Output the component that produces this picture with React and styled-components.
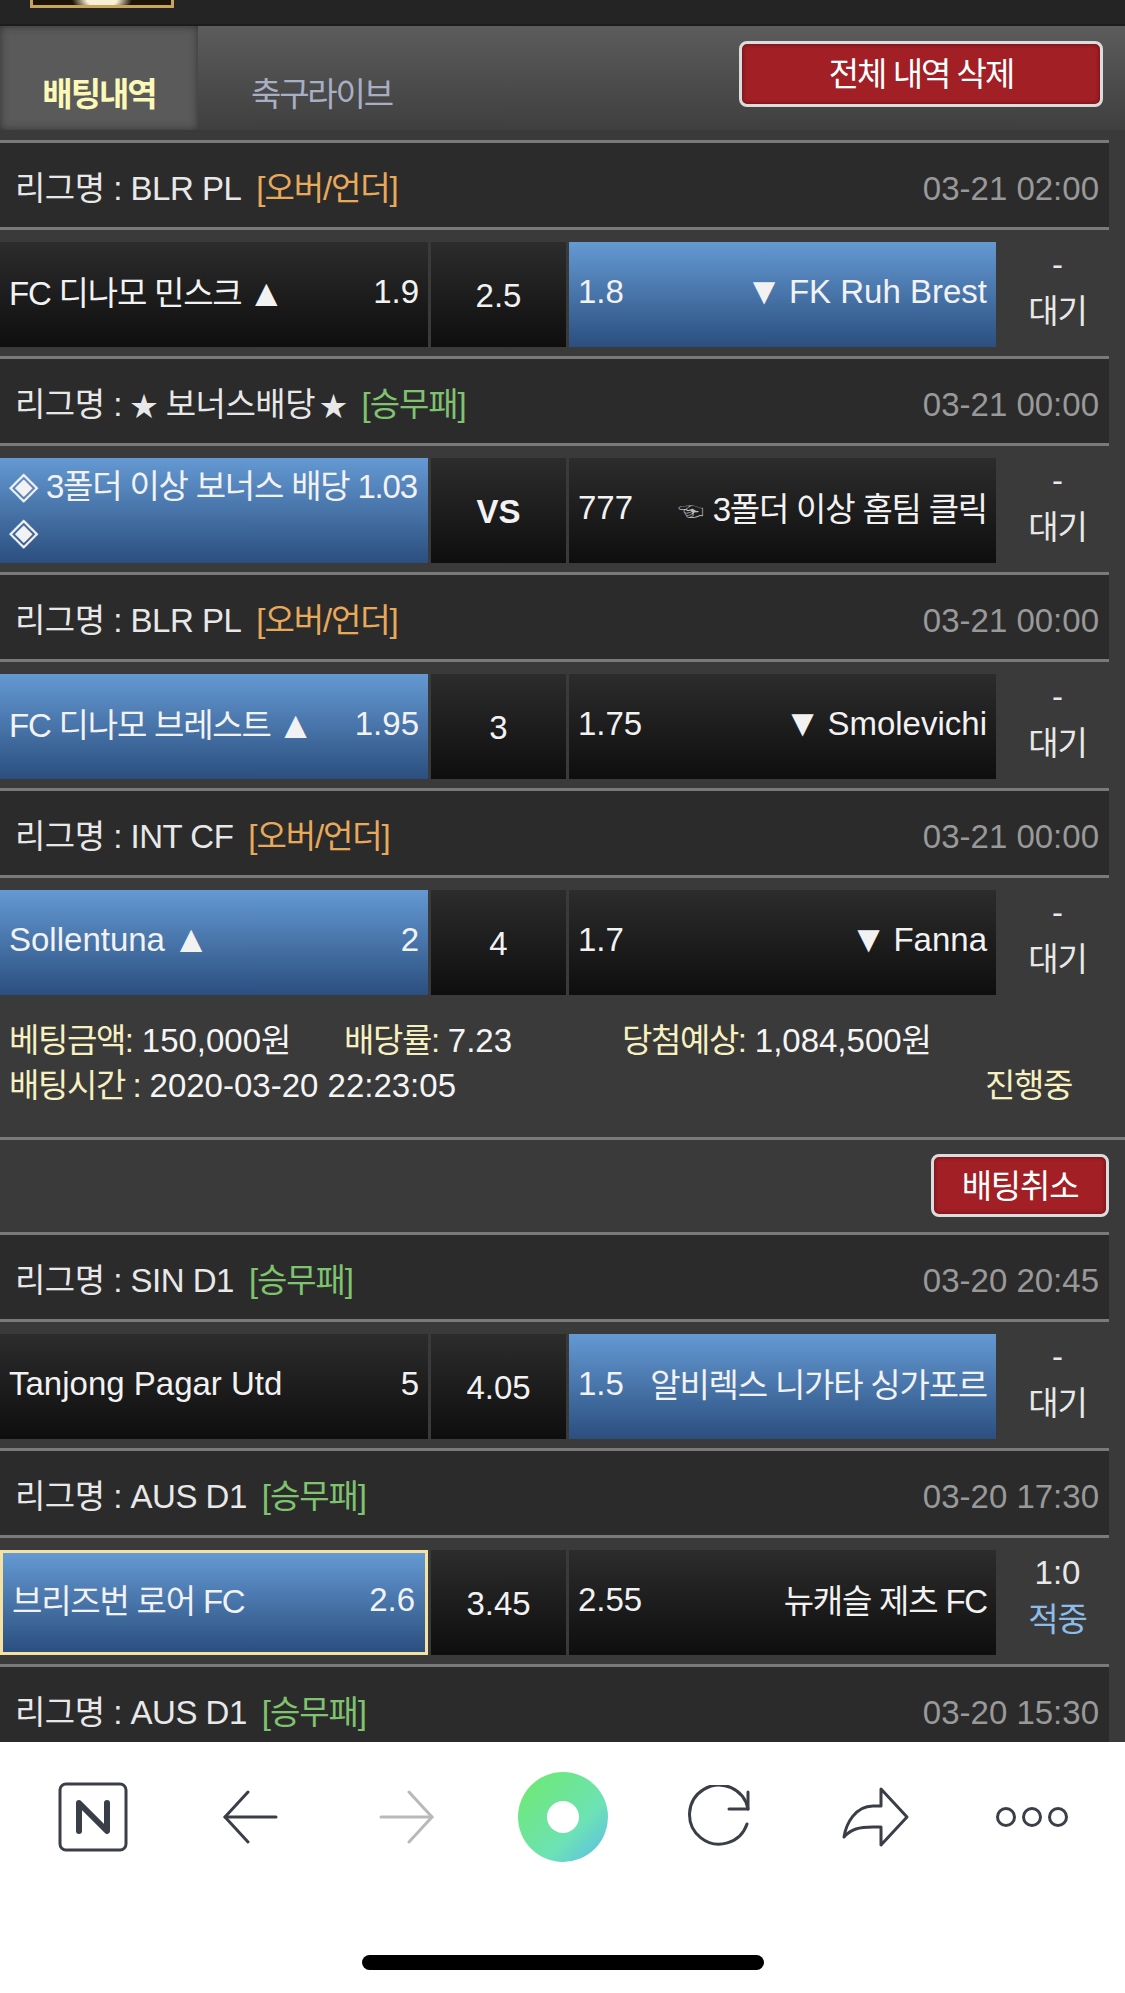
import React from "react"
import styled, { createGlobalStyle } from "styled-components"

const fontStack = `"Liberation Sans", "Noto Sans CJK KR", sans-serif`

const GlobalStyle = createGlobalStyle`
	html, body {
		margin: 0;
		padding: 0;
		background: #fff;
		font-family: ${fontStack};
	}
`

const Page = styled.div`
	width: 1125px;
	height: 1993px;
	overflow: hidden;
	display: flex;
	flex-direction: column;
	background: #fff;
`

const Content = styled.div`
	height: 1742px;
	overflow: hidden;
	background: #3a3a3a;
	flex-shrink: 0;
`

const TopBar = styled.div`
	height: 24px;
	padding-left: 30px;
	background: #242424;
	border-bottom: 2px solid #1c1c1c;
`

const Logo = styled.div`
	width: 138px;
	height: 5px;
	border: solid #c9a45c;
	border-width: 0 3px 3px;
	background: radial-gradient(ellipse 30px 14px at 50% 0, #f8f0d4 0 50%, #1d1407 100%);
`

const TabBar = styled.div`
	height: 104px;
	display: flex;
	position: relative;
	background: linear-gradient(#5c5c5c, #3f3f3f);
	margin-bottom: 10px;
`

const ActiveTab = styled.div`
	width: 198px;
	box-sizing: border-box;
	padding-top: 49px;
	text-align: center;
	font-size: 33px;
	line-height: 40px;
	font-weight: 700;
	letter-spacing: -2px;
	color: #fbf8b8;
	background: #5a5a5a;
	box-shadow: inset 0 0 9px #333;
`

const Tab = styled.div`
	padding: 49px 0 0 53px;
	font-size: 33px;
	line-height: 40px;
	letter-spacing: -2.2px;
	color: #a8aec4;
`

const RedButton = styled.div`
	position: absolute;
	box-sizing: border-box;
	display: flex;
	align-items: center;
	justify-content: center;
	border: 3px solid #dcdcdc;
	border-radius: 8px;
	color: #fff;
	font-size: 33px;
	background: #a11f25;
	box-shadow: inset 0 0 4px #5c1014;
`

const ClearButton = styled(RedButton)`
	left: 739px;
	top: 15px;
	width: 364px;
	height: 66px;
	padding-bottom: 4px;
	letter-spacing: -2px;
`

const Group = styled.div`
	width: 1109px;
`

const LeagueRow = styled.div`
	height: 84px;
	box-sizing: content-box;
	padding: 0 10px 0 15px;
	display: flex;
	align-items: center;
	justify-content: space-between;
	background: #2b2b2b;
	border-top: 3px solid #7a7a7a;
	border-bottom: 3px solid #7a7a7a;
	font-size: 33px;
	color: #e8e8e8;
`

const LeagueName = styled.div`
	display: flex;
	align-items: center;
	gap: 15px;
	padding-top: 2px;
	letter-spacing: -0.5px;
`

const Star = styled.span`
	font-size: 27px;
	margin-left: ${(p) => p.$gap || 0}px;
`

const MarketTag = styled.span`
	color: ${(p) => p.$color};
	letter-spacing: -1.1px;
`

const Time = styled.div`
	color: #999;
	padding-top: 8px;
`

const MatchRow = styled.div`
	height: 126px;
	box-sizing: border-box;
	padding: 12px 0 9px;
	display: flex;
	background: #3a3a3a;
`

const Cell = styled.div`
	box-sizing: border-box;
	color: #f2f2f2;
	font-size: 33px;
	background: ${(p) =>
		p.$picked
			? "linear-gradient(#6499d3, #2b4f7f)"
			: "linear-gradient(#2c2c2c, #0e0e0e)"};
`

const SideCell = styled(Cell)`
	width: ${(p) => p.$width}px;
	margin-right: ${(p) => p.$gap || 0}px;
	padding: 0 9px 5px 9px;
	display: flex;
	align-items: center;
	justify-content: space-between;
	${(p) => p.$outlined && "border: 3px solid #f5e2a2; padding: 0 10px 6px 9px;"}
`

const MidCell = styled(Cell)`
	width: 135px;
	margin-right: 3px;
	display: flex;
	align-items: center;
	justify-content: center;
	padding-top: 3px;
	font-weight: ${(p) => (p.$bold ? 700 : 400)};
`

const Ko = styled.span`
	letter-spacing: -1.2px;
	white-space: nowrap;
	margin-bottom: 2px;
`

const Arrow = styled.span`
	font-size: 38px;
	line-height: 0;
	letter-spacing: 0;
	vertical-align: -1px;
	margin-left: ${(p) => (p.$down ? 0 : -2)}px;
	margin-right: ${(p) => (p.$down ? -3 : 0)}px;
`

const Diamond = styled.span`
	font-size: 38px;
	line-height: 0;
	letter-spacing: 0;
`

const Hand = styled.span`
	font-size: 26px;
	color: #bdbdbd;
	margin-right: 9px;
	letter-spacing: 0;
`

const WrapText = styled.div`
	line-height: 46px;
	margin-top: 3px;
	white-space: nowrap;
`

const Status = styled.div`
	width: 113px;
	box-sizing: border-box;
	padding: 0 0 13px 10px;
	display: flex;
	flex-direction: column;
	align-items: center;
	justify-content: center;
	font-size: 33px;
	line-height: 47px;
	color: #e8e8e8;
`

const StatusWord = styled.span`
	color: ${(p) => p.$color || "#e8e8e8"};
	letter-spacing: -1.2px;
`

const Summary = styled.div`
	height: 133px;
	box-sizing: border-box;
	padding-top: 14px;
	font-size: 33px;
	line-height: 45px;
	color: #f5f5f5;
`

const SummaryLine = styled.div`
	display: flex;
	padding-left: 9px;
`

const Label = styled.span`
	color: #f7f1c0;
	letter-spacing: -1.4px;
`

const SummaryItem = styled.span`
	width: ${(p) => p.$width}px;
	flex-shrink: 0;
`

const CancelBar = styled.div`
	position: relative;
	height: 92px;
	border-top: 3px solid #7a7a7a;
`

const CancelButton = styled(RedButton)`
	left: 931px;
	top: 14px;
	width: 178px;
	height: 63px;
	padding-bottom: 4px;
	letter-spacing: -1.2px;
`

const BottomBar = styled.div`
	height: 150px;
	box-sizing: border-box;
	padding: 0 15px 0 16px;
	display: grid;
	grid-template-columns: repeat(7, 1fr);
	align-items: center;
	justify-items: center;
`

const HomeArea = styled.div`
	flex: 1;
	display: flex;
	justify-content: center;
	padding-top: 63px;
`

const HomeBar = styled.div`
	width: 402px;
	height: 15px;
	margin-left: 1px;
	border-radius: 8px;
	background: #000;
`

const IconBox = styled.svg`
	display: block;
	fill: none;
	stroke: ${(p) => p.$stroke || "#3a3f47"};
	stroke-width: 3;
	stroke-linecap: round;
	stroke-linejoin: round;
`

const NaverBox = styled(IconBox)`
	margin-right: 2px;
`

const NaverIcon = () => (
	<NaverBox width="70" height="70" viewBox="0 0 70 70">
		<rect x="2" y="2" width="66" height="66" rx="6" />
		<path d="M21 49V21L49 49V21" strokeWidth="6" />
	</NaverBox>
)

const BackIcon = () => (
	<IconBox width="56" height="54" viewBox="0 0 56 54">
		<path d="M26 2 3 27l23 25" />
		<path d="M3 27h51" />
	</IconBox>
)

const ForwardIcon = () => (
	<IconBox width="56" height="54" viewBox="0 0 56 54" $stroke="#b9b9b9">
		<path d="m30 2 23 25-23 25" />
		<path d="M53 27H2" />
	</IconBox>
)

const GreenDot = () => (
	<svg width="90" height="90" viewBox="0 0 90 90">
		<defs>
			<linearGradient id="dot" x1="0.15" y1="0.15" x2="0.9" y2="0.9">
				<stop offset="0" stopColor="#6ee87c" />
				<stop offset="0.65" stopColor="#6de2b4" />
				<stop offset="1" stopColor="#5fc6dc" />
			</linearGradient>
		</defs>
		<circle cx="45" cy="45" r="45" fill="url(#dot)" />
		<circle cx="45" cy="45" r="16" fill="#fff" />
	</svg>
)

const ReloadIcon = () => (
	<IconBox width="64" height="64" viewBox="0 0 64 64">
		<path d="M60 39A29.5 29.5 0 1 1 61 24" />
		<path d="M61 7V24H42" />
	</IconBox>
)

const ShareIcon = () => (
	<IconBox width="70" height="62" viewBox="0 0 70 62">
		<path d="M40 3 66 31 40 59V41H32C18 41 10 43 3 51 5 38 14 20 32 20H40Z" />
	</IconBox>
)

const MoreIcon = () => (
	<IconBox width="74" height="24" viewBox="0 0 74 24">
		<circle cx="11" cy="12" r="8.5" />
		<circle cx="37" cy="12" r="8.5" />
		<circle cx="63" cy="12" r="8.5" />
	</IconBox>
)

const orange = "#e8a95a"
const green = "#7fc36f"

const Match = ({ left, leftOdd, mid, right, rightOdd, picked, outlined, score = "-", word = "대기", wordColor, boldMid }) => (
	<MatchRow>
		<SideCell $width={428} $gap={3} $picked={picked === "left"} $outlined={outlined}>
			{left}
			{leftOdd && <span>{leftOdd}</span>}
		</SideCell>
		<MidCell $bold={boldMid}>{mid}</MidCell>
		<SideCell $width={427} $picked={picked === "right"}>
			<span>{rightOdd}</span>
			{right}
		</SideCell>
		<Status>
			<span>{score}</span>
			<StatusWord $color={wordColor}>{word}</StatusWord>
		</Status>
	</MatchRow>
)

const League = ({ name, tag, color, time }) => (
	<LeagueRow>
		<LeagueName>
			<span>리그명 : {name}</span>
			<MarketTag $color={color}>{tag}</MarketTag>
		</LeagueName>
		<Time>{time}</Time>
	</LeagueRow>
)

export default function App() {
	return (
		<Page>
			<GlobalStyle />
			<Content>
				<TopBar>
					<Logo />
				</TopBar>
				<TabBar>
					<ActiveTab>배팅내역</ActiveTab>
					<Tab>축구라이브</Tab>
					<ClearButton>전체 내역 삭제</ClearButton>
				</TabBar>

				<Group>
					<League name="BLR PL" tag="[오버/언더]" color={orange} time="03-21 02:00" />
					<Match
						left={<Ko>FC 디나모 민스크 <Arrow>▲</Arrow></Ko>}
						leftOdd="1.9"
						mid="2.5"
						rightOdd="1.8"
						right={<span><Arrow $down>▼</Arrow> FK Ruh Brest</span>}
						picked="right"
					/>
				</Group>
				<Group>
					<League name={<><Star>★</Star> 보너스배당<Star $gap={5}>★</Star></>} tag="[승무패]" color={green} time="03-21 00:00" />
					<Match
						left={<WrapText><Ko><Diamond>◈</Diamond> 3폴더 이상 보너스 배당 1.03<br /><Diamond>◈</Diamond></Ko></WrapText>}
						mid="VS"
						boldMid
						rightOdd="777"
						right={<Ko><Hand>☜</Hand>3폴더 이상 홈팀 클릭</Ko>}
						picked="left"
					/>
				</Group>
				<Group>
					<League name="BLR PL" tag="[오버/언더]" color={orange} time="03-21 00:00" />
					<Match
						left={<Ko>FC 디나모 브레스트 <Arrow>▲</Arrow></Ko>}
						leftOdd="1.95"
						mid="3"
						rightOdd="1.75"
						right={<span><Arrow $down>▼</Arrow> Smolevichi</span>}
						picked="left"
					/>
				</Group>
				<Group>
					<League name="INT CF" tag="[오버/언더]" color={orange} time="03-21 00:00" />
					<Match
						left={<span>Sollentuna <Arrow>▲</Arrow></span>}
						leftOdd="2"
						mid="4"
						rightOdd="1.7"
						right={<span><Arrow $down>▼</Arrow> Fanna</span>}
						picked="left"
					/>
				</Group>

				<Summary>
					<SummaryLine>
						<SummaryItem $width={335}><Label>베팅금액:</Label> 150,000원</SummaryItem>
						<SummaryItem $width={278}><Label>배당률:</Label> 7.23</SummaryItem>
						<SummaryItem $width={400}><Label>당첨예상:</Label> 1,084,500원</SummaryItem>
					</SummaryLine>
					<SummaryLine>
						<SummaryItem $width={976}><Label>배팅시간 :</Label> 2020-03-20 22:23:05</SummaryItem>
						<Label>진행중</Label>
					</SummaryLine>
				</Summary>

				<CancelBar>
					<CancelButton>배팅취소</CancelButton>
				</CancelBar>

				<Group>
					<League name="SIN D1" tag="[승무패]" color={green} time="03-20 20:45" />
					<Match
						left="Tanjong Pagar Utd"
						leftOdd="5"
						mid="4.05"
						rightOdd="1.5"
						right={<Ko>알비렉스 니가타 싱가포르</Ko>}
						picked="right"
					/>
				</Group>
				<Group>
					<League name="AUS D1" tag="[승무패]" color={green} time="03-20 17:30" />
					<Match
						left={<Ko>브리즈번 로어 FC</Ko>}
						leftOdd="2.6"
						mid="3.45"
						rightOdd="2.55"
						right={<Ko>뉴캐슬 제츠 FC</Ko>}
						picked="left"
						outlined
						score="1:0"
						word="적중"
						wordColor="#8dbce8"
					/>
				</Group>
				<Group>
					<League name="AUS D1" tag="[승무패]" color={green} time="03-20 15:30" />
				</Group>
			</Content>

			<BottomBar>
				<NaverIcon />
				<BackIcon />
				<ForwardIcon />
				<GreenDot />
				<ReloadIcon />
				<ShareIcon />
				<MoreIcon />
			</BottomBar>
			<HomeArea>
				<HomeBar />
			</HomeArea>
		</Page>
	)
}
